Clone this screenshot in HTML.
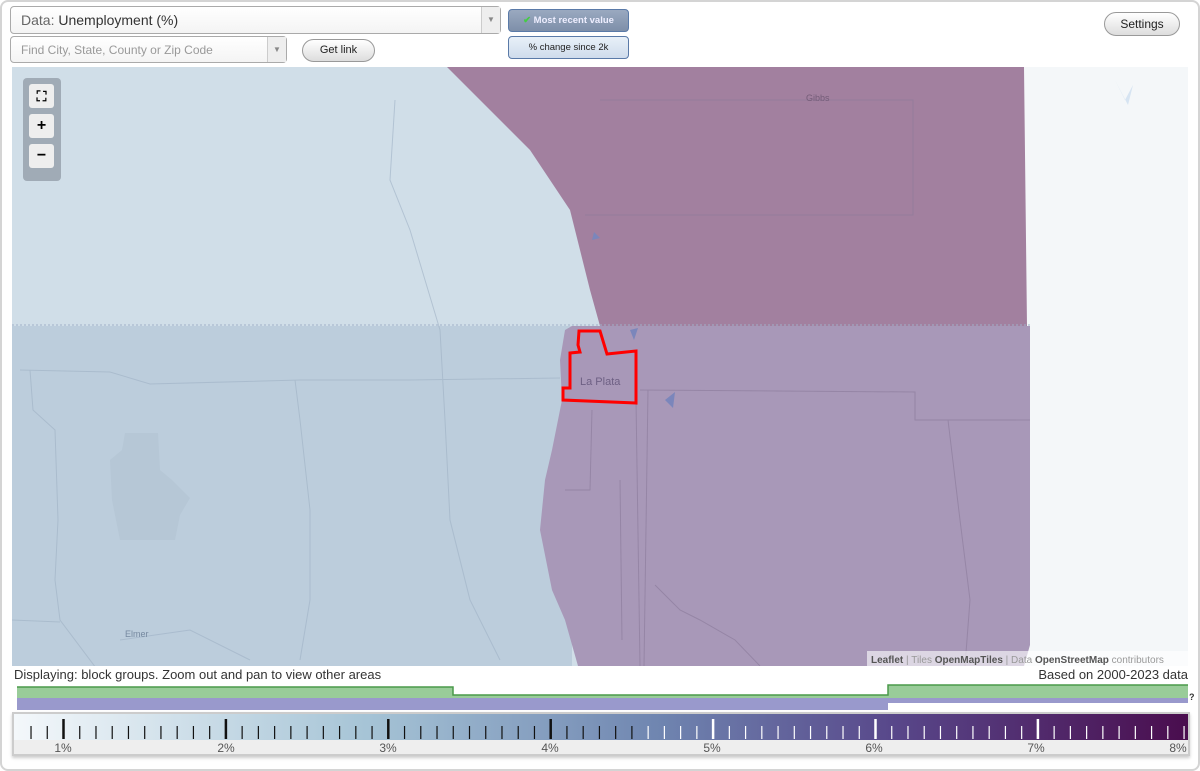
<!DOCTYPE html>
<html><head><meta charset="utf-8"><style>
body{margin:0;width:1200px;height:771px;background:#fff;font-family:"Liberation Sans",sans-serif;position:relative;overflow:hidden}
.frame{position:absolute;left:0;top:0;width:1196px;height:767px;border:2px solid #d4d4d4;border-radius:8px}
.sel{position:absolute;border:1px solid #aaa;border-radius:4px;background:linear-gradient(#fff,#f4f4f4);box-sizing:border-box}
.arr{position:absolute;right:0;top:0;bottom:0;width:18px;border-left:1px solid #ccc;background:#eee;color:#888;font-size:8px;text-align:center}
.btn{position:absolute;border:1px solid #999;border-radius:12px;background:linear-gradient(#fff,#ddd);font-size:11px;text-align:center;box-sizing:border-box;color:#222}
.tb{position:absolute;left:508px;width:121px;height:23px;border:1px solid #5a7aa8;border-radius:4px;box-sizing:border-box;font-size:9.5px;text-align:center;line-height:21px}
.zb{position:absolute;left:29px;width:25px;height:24px;background:#eee;border-radius:3px;text-align:center;font-weight:bold;font-size:16px;line-height:24px}
</style></head><body>
<div class="frame"></div>
<div class="sel" style="left:10px;top:6px;width:491px;height:28px;font-size:14px;line-height:27px;padding-left:10px;color:#333"><span style="color:#666">Data:</span> Unemployment (%)<div class="arr" style="line-height:26px">▼</div></div>
<div class="sel" style="left:10px;top:36px;width:277px;height:27px;font-size:12px;line-height:26px;padding-left:10px;color:#999">Find City, State, County or Zip Code<div class="arr" style="line-height:26px">▼</div></div>
<div class="btn" style="left:302px;top:39px;width:73px;height:23px;line-height:21px">Get link</div>
<div class="tb" style="top:9px;background:linear-gradient(#9aa9c0,#7e8fa9);color:#eef;font-weight:bold"><span style="color:#4c4">✔</span> Most recent value</div>
<div class="tb" style="top:36px;background:linear-gradient(#e8f0f8,#cfdcec);color:#222">% change since 2k</div>
<div class="btn" style="left:1104px;top:12px;width:76px;height:24px;line-height:22px;font-size:12px">Settings</div>

<svg style="position:absolute;left:12px;top:67px" width="1176" height="599" viewBox="12 67 1176 599">
<rect x="12" y="67" width="1176" height="599" fill="#d0dee8"/>
<rect x="1024" y="67" width="164" height="599" fill="#f4f7f9"/>
<rect x="12" y="326" width="560" height="340" fill="#bccddc"/>
<polygon points="447,67 1024,67 1027,326 600,326 590,290 570,210 530,150" fill="#a2809f"/>
<polygon points="572,326 1030,326 1030,645 1024,666 578,666 565,620 552,590 540,530 545,480 552,450 562,400 560,360 565,330" fill="#a898b8"/>
<polygon points="110,460 122,450 125,433 158,433 160,470 172,480 190,498 180,515 175,540 120,540 112,500" fill="#b6c7d6"/>
<g fill="none" stroke="#9fb1c4" stroke-width="1" opacity=".6">
<path d="M20,370 L110,372 L150,384 L300,380 L410,380 L560,378"/>
<path d="M30,370 L33,410 L55,430 L58,520 L55,580 L60,620 L120,700"/>
<path d="M295,380 L300,420 L310,510 L310,600 L300,660"/>
<path d="M395,100 L390,180 L410,230 L440,330 L445,420 L450,520 L470,600 L500,660"/>
<path d="M12,620 L60,622 M120,640 L190,630 L250,660"/>
</g>
<g fill="none" stroke="#8a7a9a" stroke-width="1" opacity=".6">
<path d="M640,390 L915,392 L915,420 L1030,420"/>
<path d="M648,390 L644,666 M636,400 L640,666"/>
<path d="M592,410 L590,490 L565,490 M655,585 L680,610 L700,620 L735,640 L760,666 M620,480 L622,640"/>
<path d="M948,420 L960,520 L970,600 L965,666"/>
<path d="M585,215 L913,215 L913,100 L600,100"/>
</g>
<line x1="12" y1="325" x2="1030" y2="325" stroke="#a0b0c8" stroke-dasharray="2,2"/>
<path d="M594,232 l6,6 -8,2z M630,330 l8,-2 -4,12z M665,400 l10,-8 -2,16z" fill="#7b86bb"/>
<path d="M1115,80 l10,20 8,-15 -5,20 z" fill="#d6e4f2"/>
<text x="806" y="101" font-size="9" fill="#745c78" font-family="Liberation Sans">Gibbs</text>
<text x="125" y="637" font-size="9" fill="#7689a0" font-family="Liberation Sans">Elmer</text>
<text x="580" y="385" font-size="11" fill="#6e6084" font-family="Liberation Sans">La Plata</text>
<polygon points="579,331 600,331 607,354 636,351 636,403 563,400 563,388 570,388 570,353 580,352 578,345" fill="none" stroke="#f00" stroke-width="3"/>
<rect x="867" y="651" width="321" height="15" fill="#ffffff" opacity=".6"/>
<text x="871" y="663" font-size="10" fill="#999" font-family="Liberation Sans"><tspan fill="#555" font-weight="bold">Leaflet</tspan> | Tiles <tspan fill="#555" font-weight="bold">OpenMapTiles</tspan> | Data <tspan fill="#555" font-weight="bold">OpenStreetMap</tspan> contributors</text>
</svg>
<div style="position:absolute;left:23px;top:78px;width:38px;height:103px;background:rgba(120,130,140,.55);border-radius:4px"></div>
<div class="zb" style="top:84px;font-size:14px">⛶</div>
<div class="zb" style="top:114px">+</div>
<div class="zb" style="top:144px">−</div>

<div style="position:absolute;left:14px;top:667px;font-size:13px;color:#333">Displaying: block groups. Zoom out and pan to view other areas</div>
<div style="position:absolute;right:12px;top:667px;font-size:13px;color:#333">Based on 2000-2023 data</div>
<svg style="position:absolute;left:0;top:680px" width="1200" height="32">
<path d="M17,7 H453 V15 H888 V5 H1188 V18 H17Z" fill="#99cc99"/>
<path d="M17,7 H453 V15 H888 V5 H1188" fill="none" stroke="#4a9a4a" stroke-width="1.5"/>
<rect x="17" y="18" width="871" height="12" fill="#9999cc"/>
<rect x="888" y="18" width="300" height="5" fill="#9999cc"/>
<text x="1189" y="20" font-size="9" font-weight="bold" fill="#333">?</text>
</svg>
<div style="position:absolute;left:12px;top:712px;width:1178px;height:44px;border:2px solid #ccc;box-sizing:border-box;background:#eee;box-shadow:0 2px 3px #ccc"></div>
<svg style="position:absolute;left:0;top:0" width="1200" height="771">
<defs><linearGradient id="g" x1="0" x2="1"><stop offset="0" stop-color="#f4f8fb"/><stop offset=".3" stop-color="#a6c4d6"/><stop offset=".55" stop-color="#6f85b0"/><stop offset=".75" stop-color="#58478a"/><stop offset="1" stop-color="#4a0d4e"/></linearGradient></defs>
<rect x="14" y="714" width="1174" height="26" fill="url(#g)"/>
<g id="t"></g>
<g font-size="12" fill="#555" text-anchor="middle">
<text x="63" y="752">1%</text><text x="226" y="752">2%</text><text x="388" y="752">3%</text><text x="550" y="752">4%</text><text x="712" y="752">5%</text><text x="874" y="752">6%</text><text x="1036" y="752">7%</text><text x="1178" y="752">8%</text>
</g>
</svg>
<script>
var g=document.getElementById('t'),s='';
for(var i=-2;i<=71;i++){var x=63.5+i*16.24;if(x<20||x>1186)continue;var maj=(i%10==0);var c=(i<=35)?'#111':'#fff';
s+='<line x1="'+x+'" x2="'+x+'" y1="'+(maj?719:726)+'" y2="739" stroke="'+c+'" stroke-width="'+(maj?2.5:1.2)+'"/>';}
g.innerHTML=s;
</script>
</body></html>
